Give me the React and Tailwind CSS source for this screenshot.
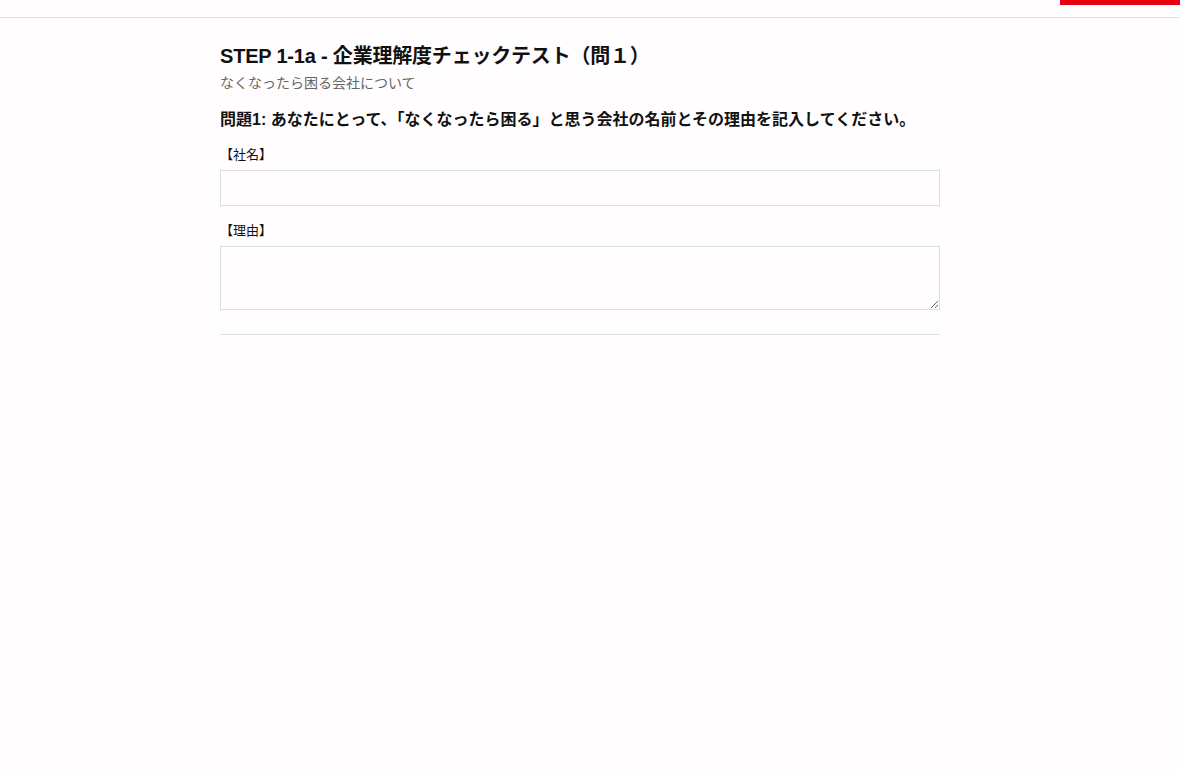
export default function App() {
  return (
    <div
      className="min-h-[774px] bg-[#fffdfd] text-[#111]"
      style={{ fontFamily: '"Liberation Sans", "Noto Sans CJK JP", sans-serif' }}
    >
      <header className="flex h-[18px] justify-end border-b border-[#e2e2e2]">
        <div className="h-[5px] w-[120px] bg-[#e60012]" />
      </header>
      <main className="ml-[220px] w-[720px] pt-[23px]">
        <h1 className="text-[20px] font-bold leading-[30px] tracking-[-0.2px]">
          STEP 1-1a - 企業理解度チェックテスト（問１）
        </h1>
        <p className="mt-[2px] text-[14px] leading-[20px] text-[#666]">なくなったら困る会社について</p>
        <h2 className="mt-[15px] text-[16px] font-bold leading-[24px]">
          問題1: あなたにとって、「なくなったら困る」と思う会社の名前とその理由を記入してください。
        </h2>
        <div className="mt-[13px]">
          <label className="block text-[13px] leading-[20px]">【社名】</label>
          <input
            type="text"
            className="mt-[5px] block h-[36px] w-full border border-[#dedede] bg-[#fffdfd] px-2 text-[14px] outline-none"
          />
        </div>
        <div className="mt-[15px]">
          <label className="block text-[13px] leading-[20px]">【理由】</label>
          <textarea className="mt-[5px] block h-[64px] w-full border border-[#dedede] bg-[#fffdfd] px-2 py-1 text-[14px] outline-none" />
        </div>
        <hr className="mt-[24px] border-t border-[#e0e0e0]" />
      </main>
    </div>
  );
}
